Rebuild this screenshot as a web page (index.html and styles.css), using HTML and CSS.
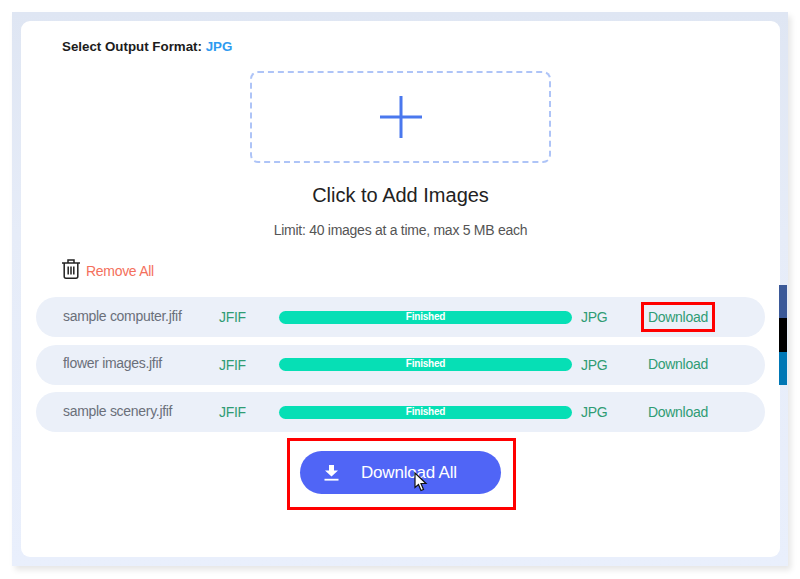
FILE: index.html
```html
<!DOCTYPE html>
<html lang="en">
<head>
    <meta charset="UTF-8">
    <meta name="viewport" content="width=device-width, initial-scale=1.0">
    <title>Image Converter</title>
    <link rel="stylesheet" href="styles.css">
</head>
<body>
    <div class="frame">
        <div class="card">
            <p class="format">Select Output Format: <span class="format-value">JPG</span></p>

            <div class="dropzone">
                <svg class="plus" width="42" height="42" viewBox="0 0 42 42">
                    <path d="M21 0V42M0 21H42" stroke="#4a78ee" stroke-width="3" fill="none"/>
                </svg>
            </div>
            <h2 class="add-title">Click to Add Images</h2>
            <p class="limit">Limit: 40 images at a time, max 5 MB each</p>

            <div class="remove-all">
                <svg width="18" height="20" viewBox="0 0 18 20" fill="none" stroke="#222" stroke-width="1.5">
                    <path d="M0 4H18"/>
                    <path d="M6 4V1H12V4"/>
                    <path d="M2.2 4V17.5Q2.2 19.2 4 19.2H14Q15.8 19.2 15.8 17.5V4"/>
                    <path d="M6.2 7.5V15.5M9 7.5V15.5M11.8 7.5V15.5"/>
                </svg>
                <span class="remove-label">Remove All</span>
            </div>

            <div class="file-list">
                <div class="file-row">
                    <span class="file-name">sample computer.jfif</span>
                    <span class="file-from">JFIF</span>
                    <div class="progress">Finished</div>
                    <span class="file-to">JPG</span>
                    <a class="file-download marked">Download</a>
                </div>
                <div class="file-row">
                    <span class="file-name">flower images.jfif</span>
                    <span class="file-from">JFIF</span>
                    <div class="progress">Finished</div>
                    <span class="file-to">JPG</span>
                    <a class="file-download">Download</a>
                </div>
                <div class="file-row">
                    <span class="file-name">sample scenery.jfif</span>
                    <span class="file-from">JFIF</span>
                    <div class="progress">Finished</div>
                    <span class="file-to">JPG</span>
                    <a class="file-download">Download</a>
                </div>
            </div>

            <div class="download-all-box">
                <button class="download-all">
                    <svg width="15" height="16" viewBox="0 0 15 16" fill="#fff">
                        <path d="M5 0H10V5.5H14L7.5 11.5L1 5.5H5Z"/>
                        <rect x="0.5" y="13.8" width="14" height="1.8"/>
                    </svg>
                    <span>Download All</span>
                </button>
                <svg class="cursor" width="14" height="20" viewBox="0 0 14 20">
                    <path d="M1 1V15.5L4.5 12.5L7 18.5L9.5 17.5L7 11.5H12Z" fill="#fff" stroke="#111" stroke-width="1.2"/>
                </svg>
            </div>
        </div>

        <div class="share-strip">
            <div class="share-fb"></div>
            <div class="share-x"></div>
            <div class="share-in"></div>
        </div>
    </div>
</body>
</html>
```

FILE: styles.css
```css
body, h2, p {
    margin: 0;
    padding: 0;
    font-family: 'Liberation Sans', Arial, sans-serif;
}

body {
    background: #fff;
    height: 579px;
    overflow: hidden;
}

.frame {
    position: relative;
    width: 776px;
    height: 554px;
    margin: 12px 0 0 12px;
    padding: 9px 8px 9px 9px;
    box-sizing: border-box;
    background: linear-gradient(180deg, #dfe6f3 0%, #e6ecf8 40%, #e9effc 100%);
    box-shadow: 3px 4px 6px rgba(0, 0, 0, 0.1);
}

.card {
    height: 100%;
    background: #fff;
    border-radius: 9px;
    display: flex;
    flex-direction: column;
    align-items: center;
}

.format {
    align-self: flex-start;
    margin: 19px 0 0 41px;
    font-size: 13.33px;
    line-height: 14px;
    font-weight: bold;
    color: #1c1c1c;
}

.format-value {
    color: #2e9bf0;
}

.dropzone {
    width: 301px;
    height: 92px;
    box-sizing: border-box;
    margin-top: 17px;
    border: 2px dashed #aec4f7;
    border-radius: 8px;
    display: flex;
    align-items: center;
    justify-content: center;
}

.add-title {
    margin-top: 20px;
    font-size: 20px;
    line-height: 24px;
    font-weight: normal;
    color: #222;
}

.limit {
    margin-top: 15px;
    font-size: 14px;
    letter-spacing: -0.27px;
    line-height: 16px;
    color: #555;
}

.remove-all {
    align-self: flex-start;
    margin: 21px 0 0 41px;
    display: flex;
    align-items: center;
    gap: 6px;
    font-size: 14px;
    letter-spacing: -0.3px;
    color: #f4705c;
}

.remove-label {
    margin-top: 4px;
}

.file-list {
    align-self: stretch;
    margin: 18px 15px 0;
    display: flex;
    flex-direction: column;
    gap: 7.5px;
}

.file-row {
    height: 40px;
    background: #ebf0f9;
    border-radius: 20px;
    display: flex;
    align-items: center;
    font-size: 14px;
    letter-spacing: -0.3px;
}

.file-name {
    width: 156px;
    margin-left: 27px;
    margin-top: -3px;
    color: #6a6f7a;
}

.file-from {
    width: 60px;
    color: #2f9c74;
}

.progress {
    width: 293px;
    height: 13px;
    background: #06dfb5;
    border-radius: 7px;
    color: #fff;
    font-size: 10px;
    letter-spacing: -0.2px;
    font-weight: bold;
    line-height: 12px;
    text-align: center;
}

.file-to {
    width: 67px;
    margin-left: 9px;
    color: #2f9c74;
}

.file-download {
    margin-top: -1px;
    color: #2f9c74;
}

.marked {
    outline: 3px solid #f00;
    outline-offset: 4px;
}

.download-all-box {
    position: relative;
    margin-top: 6px;
    margin-left: 2px;
    padding: 10px 12px 13px 10px;
    border: 3px solid #f00;
}

.download-all {
    width: 201px;
    height: 43px;
    border: none;
    border-radius: 22px;
    background: #5065f6;
    color: #fff;
    font-family: inherit;
    font-size: 17px;
    letter-spacing: -0.2px;
    padding: 0 0 0 24px;
    display: flex;
    align-items: center;
    gap: 22px;
    cursor: pointer;
}

.cursor {
    position: absolute;
    left: 124px;
    top: 31px;
}

.share-strip {
    position: absolute;
    left: 767px;
    top: 273px;
    width: 8px;
}

.share-fb {
    height: 33px;
    background: #3b5998;
}

.share-x {
    height: 34px;
    background: #000;
}

.share-in {
    height: 33px;
    background: #0077b5;
}
```
